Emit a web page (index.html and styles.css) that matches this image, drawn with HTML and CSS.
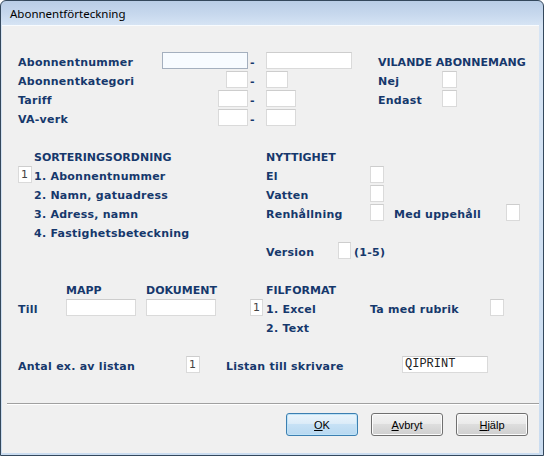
FILE: index.html
```html
<!DOCTYPE html>
<html lang="sv">
<head>
<meta charset="utf-8">
<title>Abonnentförteckning</title>
<link rel="stylesheet" href="styles.css">
</head>
<body>
<div class="window">
  <div class="titlebar"><span class="title">Abonnentförteckning</span></div>
  <div class="client">
    <div class="form">
      <span class="lbl r1 c1">Abonnentnummer</span>
      <span class="fld r1 c19 w10 focus"></span>
      <span class="lbl r1 c30">-</span>
      <span class="fld r1 c32 w10"></span>
      <span class="lbl head r1 c46">VILANDE ABONNEMANG</span>

      <span class="lbl r2 c1">Abonnentkategori</span>
      <span class="fld r2 c27 w2"></span>
      <span class="lbl r2 c30">-</span>
      <span class="fld r2 c32 w2"></span>
      <span class="lbl r2 c46">Nej</span>
      <span class="fld r2 c54 wc"></span>

      <span class="lbl r3 c1">Tariff</span>
      <span class="fld r3 c26 w3"></span>
      <span class="lbl r3 c30">-</span>
      <span class="fld r3 c32 w3"></span>
      <span class="lbl r3 c46">Endast</span>
      <span class="fld r3 c54 wc"></span>

      <span class="lbl r4 c1">VA-verk</span>
      <span class="fld r4 c26 w3"></span>
      <span class="lbl r4 c30">-</span>
      <span class="fld r4 c32 w3"></span>

      <span class="lbl head r6 c3">SORTERINGSORDNING</span>
      <span class="lbl head r6 c32">NYTTIGHET</span>

      <span class="fld r7 c1 w1">1</span>
      <span class="lbl r7 c3">1. Abonnentnummer</span>
      <span class="lbl r7 c32">El</span>
      <span class="fld r7 c45 w1"></span>

      <span class="lbl r8 c3">2. Namn, gatuadress</span>
      <span class="lbl r8 c32">Vatten</span>
      <span class="fld r8 c45 w1"></span>

      <span class="lbl r9 c3">3. Adress, namn</span>
      <span class="lbl r9 c32">Renhållning</span>
      <span class="fld r9 c45 w1"></span>
      <span class="lbl r9 c48">Med uppehåll</span>
      <span class="fld r9 c62 w1"></span>

      <span class="lbl r10 c3">4. Fastighetsbeteckning</span>

      <span class="lbl r11 c32">Version</span>
      <span class="fld r11 c41 wv"></span>
      <span class="lbl r11 c43">(1-5)</span>

      <span class="lbl head r13 c7">MAPP</span>
      <span class="lbl head r13 c17">DOKUMENT</span>
      <span class="lbl head r13 c32">FILFORMAT</span>

      <span class="lbl r14 c1">Till</span>
      <span class="fld r14 c7 w8"></span>
      <span class="fld r14 c17 w8"></span>
      <span class="fld r14 c30 wv">1</span>
      <span class="lbl r14 c32">1. Excel</span>
      <span class="lbl r14 c45">Ta med rubrik</span>
      <span class="fld r14 c60 w1"></span>

      <span class="lbl r15 c32">2. Text</span>

      <span class="lbl r17 c1">Antal ex. av listan</span>
      <span class="fld r17 c22 w1">1</span>
      <span class="lbl r17 c27">Listan till skrivare</span>
      <span class="fld r17 c49 w10 mono">QIPRINT</span>
    </div>
    <div class="sep"></div>
    <div class="buttons">
      <button class="btn default"><u>O</u>K</button>
      <button class="btn"><u>A</u>vbryt</button>
      <button class="btn"><u>H</u>jälp</button>
    </div>
  </div>
</div>
</body>
</html>
```

FILE: styles.css
```css
html, body {
  margin: 0;
  padding: 0;
  background: #ffffff;
}

.window {
  width: 544px;
  height: 456px;
  box-sizing: border-box;
  border: 1px solid #34485c;
  border-radius: 6px 6px 0 0;
  background: linear-gradient(to bottom, #b9cde6 0px, #c8d9ee 14px, #d6e4f4 24px, #cadcf0 100%);
  display: flex;
  flex-direction: column;
  overflow: hidden;
}

.titlebar {
  height: 24px;
  flex: none;
  padding-left: 9px;
  display: flex;
  align-items: center;
}

.title {
  font-family: "Noto Sans", "Open Sans", sans-serif;
  font-size: 11.5px;
  color: #000000;
}

.client {
  flex: 1;
  margin: 0 4px 2px 1px;
  background: #f0f0f0;
  border-top: 1px solid #f8fbfe;
  display: flex;
  flex-direction: column;
}

.form {
  padding: 26px 0 0 16px;
  display: grid;
  grid-template-columns: repeat(64, 8px);
  grid-template-rows: repeat(17, 19px);
  font-family: "DejaVu Sans", Verdana, sans-serif;
  font-size: 11px;
}

.lbl {
  white-space: nowrap;
  font-weight: bold;
  color: #16386c;
  line-height: 19px;
  padding-top: 1px;
  letter-spacing: 0.25px;
}

.lbl.head {
  letter-spacing: 0;
}

.fld {
  justify-self: start;
  align-self: start;
  height: 17px;
  box-sizing: border-box;
  background: #ffffff;
  border: 1px solid #dadada;
  border-top-color: #cdcdcd;
  color: #444444;
  line-height: 15px;
  padding-left: 2px;
  white-space: nowrap;
  overflow: hidden;
}

.fld.focus {
  border-color: #a4afbe;
  background: #f7fbff;
}

.fld.mono {
  font-family: "Liberation Mono", monospace;
  font-size: 12px;
  padding-left: 2px;
  color: #222222;
}

.w1 { width: 14px; }
.wv { width: 13px; }
.wc { width: 15px; }
.w2 { width: 22px; }
.w3 { width: 30px; }
.w8 { width: 70px; }
.w10 { width: 86px; }

.r1 { grid-row: 1; }
.r2 { grid-row: 2; }
.r3 { grid-row: 3; }
.r4 { grid-row: 4; }
.r6 { grid-row: 6; }
.r7 { grid-row: 7; }
.r8 { grid-row: 8; }
.r9 { grid-row: 9; }
.r10 { grid-row: 10; }
.r11 { grid-row: 11; }
.r13 { grid-row: 13; }
.r14 { grid-row: 14; }
.r15 { grid-row: 15; }
.r17 { grid-row: 17; }

.c1 { grid-column: 1; }
.c3 { grid-column: 3; }
.c7 { grid-column: 7; }
.c17 { grid-column: 17; }
.c19 { grid-column: 19; }
.c22 { grid-column: 22; }
.c26 { grid-column: 26; }
.c27 { grid-column: 27; }
.c30 { grid-column: 30; }
.c32 { grid-column: 32; }
.c41 { grid-column: 41; }
.c43 { grid-column: 43; }
.c45 { grid-column: 45; }
.c46 { grid-column: 46; }
.c48 { grid-column: 48; }
.c49 { grid-column: 49; }
.c54 { grid-column: 54; }
.c60 { grid-column: 60; }
.c62 { grid-column: 62; }

.sep {
  margin: 28px 0 0 5px;
  border-top: 1px solid #a0a0a0;
  border-bottom: 1px solid #ffffff;
}

.buttons {
  display: flex;
  justify-content: flex-end;
  gap: 13px;
  padding: 8px 11px 0 0;
}

.btn {
  width: 72px;
  height: 23px;
  box-sizing: border-box;
  margin: 0;
  padding: 0;
  border: 1px solid #707070;
  border-radius: 3px;
  background: linear-gradient(to bottom, #f2f2f2 0%, #ebebeb 45%, #dddddd 50%, #cfcfcf 100%);
  box-shadow: inset 0 0 0 1px #fcfcfc;
  font-family: "Liberation Sans", Arial, sans-serif;
  font-size: 11px;
  color: #000000;
}

.btn.default {
  border-color: #3c7fb1;
  box-shadow: inset 0 0 0 1px #bfe3f7;
  background: linear-gradient(to bottom, #eaf5fc 0%, #dcecf8 45%, #c6e1f5 50%, #b8d8f0 100%);
}
```
